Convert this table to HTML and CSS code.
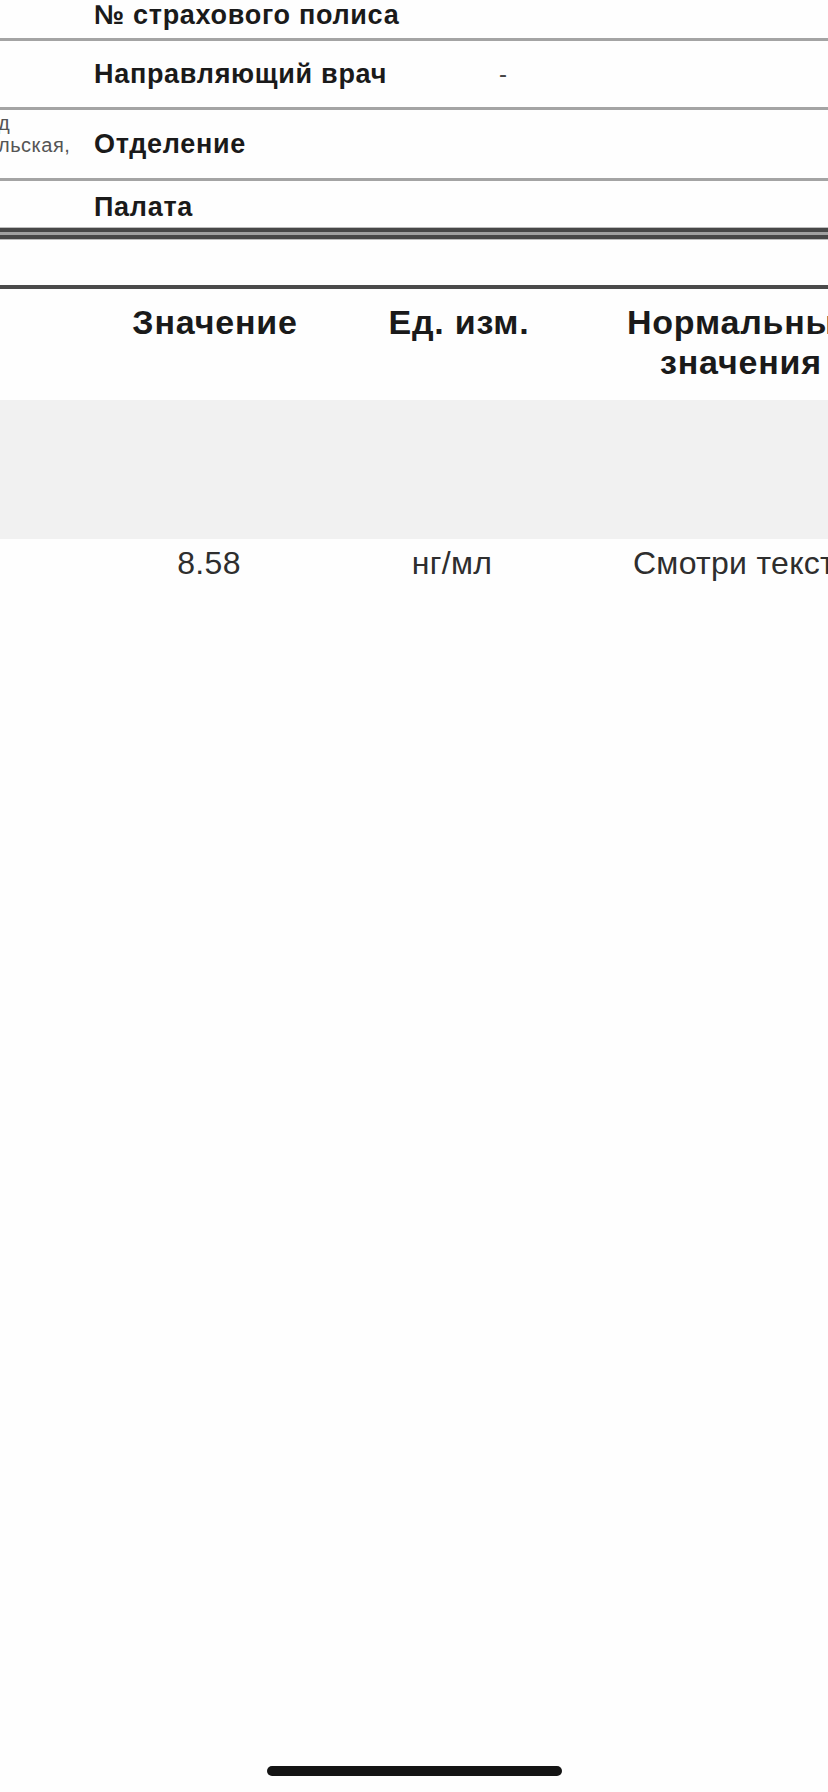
FILE: index.html
```html
<!DOCTYPE html>
<html lang="ru">
<head>
    <meta charset="UTF-8">
    <meta name="viewport" content="width=device-width, initial-scale=1.0">
    <title>Результаты анализа</title>
    <link rel="stylesheet" href="styles.css">
</head>
<body>
    <div class="page">
        <div class="info">
            <div class="info-row row-policy">
                <div class="side"></div>
                <div class="label">№ страхового полиса</div>
                <div class="value"></div>
            </div>
            <div class="info-row row-doctor">
                <div class="side"></div>
                <div class="label">Направляющий врач</div>
                <div class="value">-</div>
            </div>
            <div class="info-row row-dept">
                <div class="side">д<br>льская,</div>
                <div class="label">Отделение</div>
                <div class="value"></div>
            </div>
            <div class="info-row row-ward last">
                <div class="side"></div>
                <div class="label">Палата</div>
                <div class="value"></div>
            </div>
            <div class="double-rule"></div>
        </div>

        <table class="results">
            <thead>
                <tr>
                    <th class="col-name"></th>
                    <th class="col-value">Значение</th>
                    <th class="col-unit">Ед. изм.</th>
                    <th class="col-norm">Нормальные значения</th>
                </tr>
            </thead>
            <tbody>
                <tr class="group">
                    <td colspan="4"></td>
                </tr>
                <tr>
                    <td class="col-name"></td>
                    <td class="col-value">8.58</td>
                    <td class="col-unit">нг/мл</td>
                    <td class="col-norm">Смотри текст</td>
                </tr>
            </tbody>
        </table>
    </div>

    <div class="home-indicator"></div>
</body>
</html>
```

FILE: styles.css
```css
body {
    margin: 0;
    width: 828px;
    height: 1792px;
    overflow: hidden;
    background-color: #fefefe;
    font-family: 'Liberation Sans', Arial, sans-serif;
    color: #1a1a1a;
    position: relative;
}
.page {
    width: 828px;
    overflow: hidden;
}
.info-row {
    display: grid;
    grid-template-columns: 94px 405px 1fr;
    align-items: center;
    border-bottom: 3px solid #a4a4a4;
}
.info-row.last {
    border-bottom: none;
}
.row-policy {
    height: 38px;
    align-items: start;
}
.row-policy .label {
    line-height: 30px;
}
.row-doctor {
    height: 66px;
}
.row-dept {
    height: 68px;
}
.row-ward {
    height: 47px;
    padding-top: 5px;
    box-sizing: border-box;
}
.label {
    font-size: 27px;
    font-weight: bold;
    letter-spacing: 0.7px;
    white-space: nowrap;
}
.value {
    font-size: 24px;
    color: #444;
}
.side {
    align-self: start;
    margin-left: -2px;
    padding-top: 2px;
    font-size: 20px;
    letter-spacing: 0.5px;
    line-height: 22px;
    color: #555;
    white-space: nowrap;
    overflow: hidden;
}
.double-rule {
    height: 3px;
    border-top: 4px solid #474747;
    border-bottom: 4px solid #474747;
    background-color: #a0a0a0;
    box-shadow: 0 -1px 0 #bdbdbd, 0 1px 0 #bdbdbd;
}
.results {
    width: 890px;
    margin-top: 46px;
    border-collapse: collapse;
    table-layout: fixed;
}
.results thead tr {
    border-top: 4px solid #4a4a4a;
}
.results th {
    height: 113px;
    padding: 13px 0 0;
    vertical-align: top;
    box-sizing: border-box;
    font-size: 34px;
    font-weight: bold;
    letter-spacing: 0.8px;
    line-height: 40px;
    color: #1a1a1a;
    text-align: center;
}
.results td {
    padding: 0;
    height: 48px;
    font-size: 32px;
    letter-spacing: 0.3px;
    color: #2e2e2e;
    text-align: center;
}
.results .group td {
    height: 139px;
    background-color: #f1f1f1;
}
.col-name {
    width: 104px;
}
.col-value {
    width: 222px;
}
.col-unit {
    width: 266px;
}
.col-norm {
    width: 298px;
    white-space: nowrap;
}
.results td.col-value {
    padding-right: 12px;
}
.results td.col-unit {
    padding-right: 14px;
}
.results td.col-norm {
    padding-right: 14px;
}
.results th.col-norm {
    white-space: normal;
}
.home-indicator {
    position: absolute;
    left: 267px;
    top: 1766px;
    width: 295px;
    height: 10px;
    border-radius: 5px;
    background-color: #141414;
}
```
